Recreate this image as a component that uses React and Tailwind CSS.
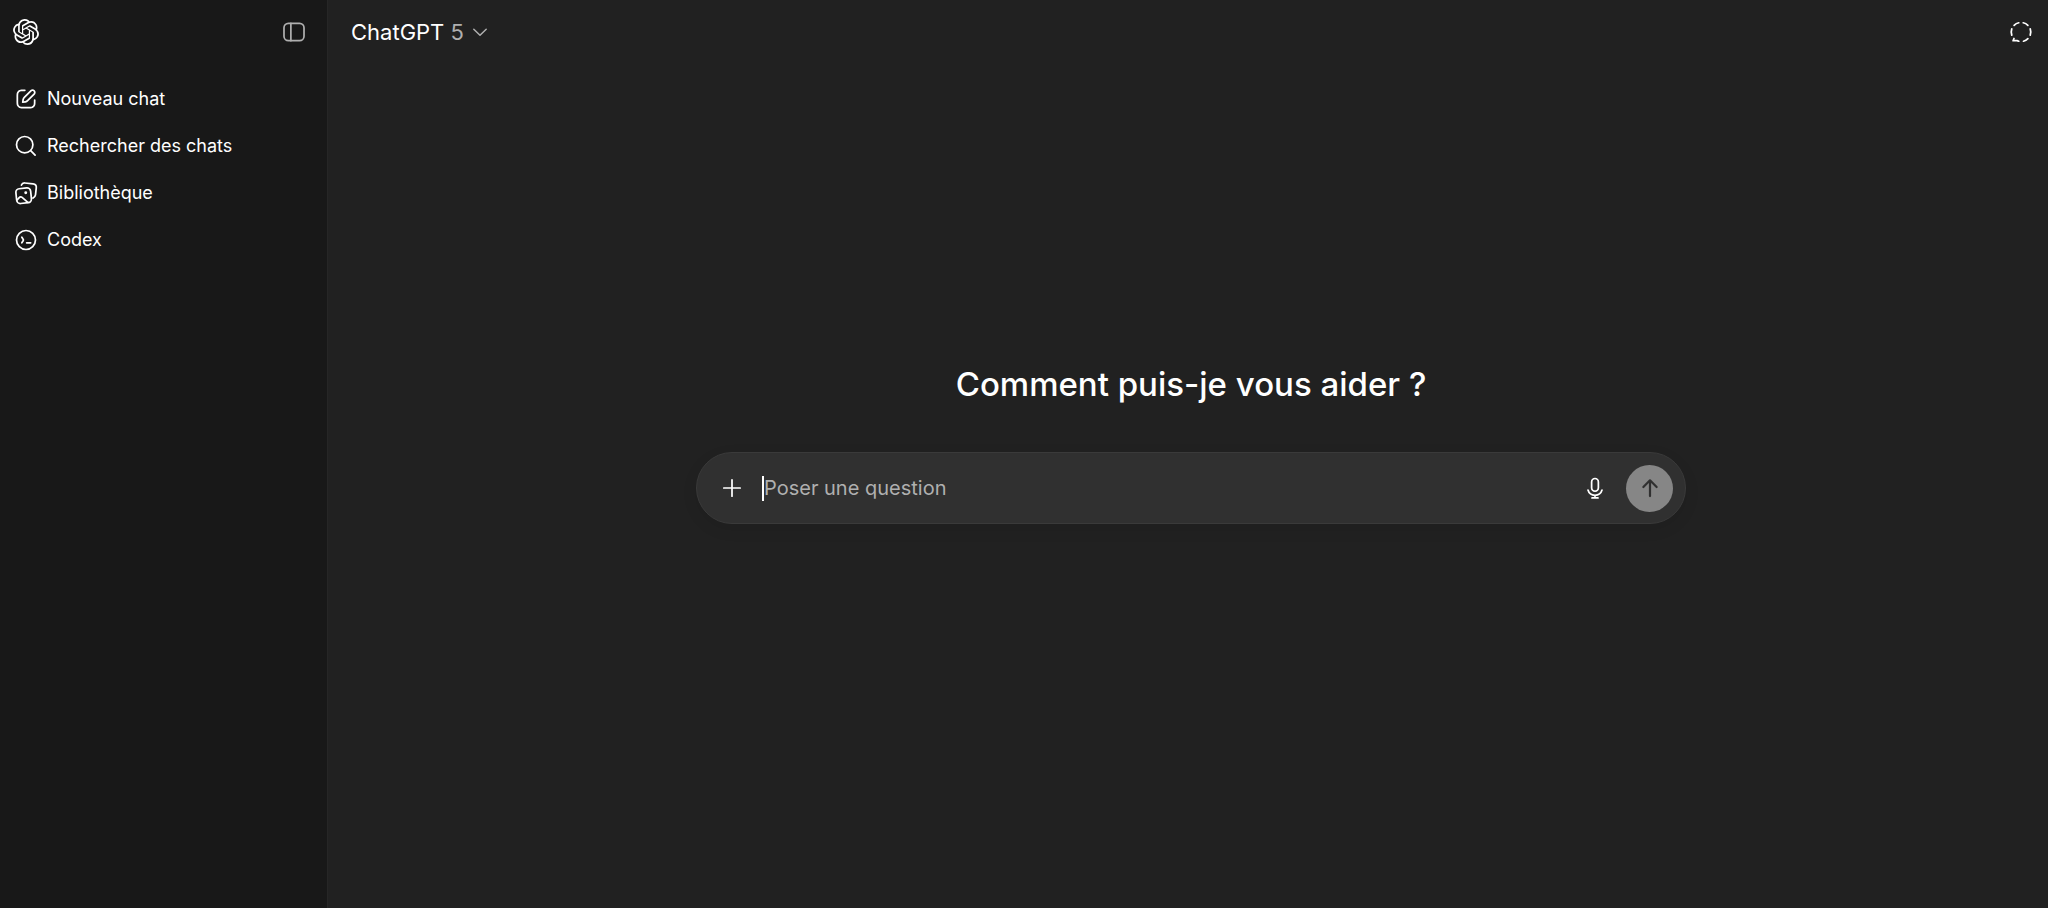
import React from "react";
import { SiOpenai } from "react-icons/si";

function Icon({ className = "", strokeWidth = 1.33, children }) {
  return (
    <svg
      viewBox="0 0 20 20"
      className={`size-[26px] shrink-0 ${className}`}
      fill="none"
      stroke="currentColor"
      strokeWidth={strokeWidth}
      strokeLinecap="round"
      strokeLinejoin="round"
      aria-hidden="true"
    >
      {children}
    </svg>
  );
}

const SidebarIcon = () => (
  <Icon>
    <rect x="2.3" y="3.3" width="15.4" height="13.4" rx="3.4" />
    <path d="M7.6 3.3v13.4" />
  </Icon>
);

const ComposeIcon = () => (
  <svg viewBox="0 0 20 20" className="size-[26px] shrink-0" fill="currentColor" aria-hidden="true">
    <path d="M2.6687 11.333V8.66699C2.6687 7.74455 2.66841 7.01205 2.71655 6.42285C2.76533 5.82612 2.86699 5.31731 3.10425 4.85156L3.25854 4.57617C3.64272 3.94975 4.19392 3.43995 4.85229 3.10449L5.02905 3.02149C5.44666 2.84233 5.90133 2.75849 6.42358 2.71582C7.01272 2.66769 7.74445 2.66797 8.66675 2.66797H9.16675C9.53393 2.66797 9.83165 2.96586 9.83179 3.33301C9.83179 3.70028 9.53402 3.99805 9.16675 3.99805H8.66675C7.7226 3.99805 7.05438 3.99834 6.53198 4.04102C6.14611 4.07254 5.87277 4.12568 5.65601 4.20313L5.45581 4.28906C5.01645 4.51293 4.64872 4.85345 4.39233 5.27149L4.28979 5.45508C4.16388 5.7022 4.08381 6.01663 4.04175 6.53125C3.99906 7.05373 3.99878 7.7226 3.99878 8.66699V11.333C3.99878 12.2774 3.99906 12.9463 4.04175 13.4688C4.08381 13.9833 4.16389 14.2978 4.28979 14.5449L4.39233 14.7285C4.64871 15.1465 5.01648 15.4871 5.45581 15.7109L5.65601 15.7969C5.87276 15.8743 6.14614 15.9265 6.53198 15.958C7.05439 16.0007 7.72256 16.002 8.66675 16.002H11.3337C12.2779 16.002 12.9461 16.0007 13.4685 15.958C13.9829 15.916 14.2976 15.8367 14.5447 15.7109L14.7292 15.6074C15.147 15.3511 15.4879 14.9841 15.7117 14.5449L15.7976 14.3447C15.8751 14.128 15.9272 13.8546 15.9587 13.4688C16.0014 12.9463 16.0017 12.2774 16.0017 11.333V10.833C16.0018 10.466 16.2997 10.1681 16.6667 10.168C17.0339 10.168 17.3316 10.4659 17.3318 10.833V11.333C17.3318 12.2555 17.3331 12.9879 17.2849 13.5771C17.2422 14.0993 17.1584 14.5541 16.9792 14.9717L16.8962 15.1484C16.5609 15.8066 16.0507 16.3571 15.4246 16.7412L15.1492 16.8955C14.6833 17.1329 14.1739 17.2354 13.5769 17.2842C12.9878 17.3323 12.256 17.332 11.3337 17.332H8.66675C7.74446 17.332 7.01271 17.3323 6.42358 17.2842C5.90135 17.2415 5.44665 17.1577 5.02905 16.9785L4.85229 16.8955C4.19396 16.5601 3.64271 16.0502 3.25854 15.4238L3.10425 15.1484C2.86697 14.6827 2.76534 14.1739 2.71655 13.5771C2.66841 12.9879 2.6687 12.2555 2.6687 11.333ZM13.4646 3.11328C14.4201 2.334 15.8288 2.38969 16.7195 3.28027L16.8865 3.46485C17.6141 4.35685 17.6143 5.64423 16.8865 6.53613L16.7195 6.7207L11.6726 11.7686C11.1373 12.3039 10.4624 12.6746 9.72827 12.8408L9.41089 12.8994L7.59351 13.1582C7.38637 13.1877 7.17701 13.1187 7.02905 12.9707C6.88112 12.8227 6.81199 12.6134 6.84155 12.4063L7.10132 10.5898L7.15991 10.2715C7.3262 9.53749 7.69692 8.86241 8.23218 8.32715L13.2791 3.28027L13.4646 3.11328ZM15.7791 4.2207C15.3753 3.81702 14.7366 3.79124 14.3035 4.14453L14.2195 4.2207L9.17261 9.26856C8.81541 9.62578 8.56774 10.0756 8.45679 10.5654L8.41772 10.7773L8.28296 11.7158L9.22241 11.582L9.43433 11.543C9.92426 11.432 10.3749 11.1844 10.7322 10.8271L15.7791 5.78027L15.8552 5.69629C16.185 5.29194 16.1852 4.708 15.8552 4.30371L15.7791 4.2207Z" />
  </svg>
);

const SearchIcon = () => (
  <Icon>
    <circle cx="9" cy="9" r="6.3" />
    <path d="M13.6 13.6l3.4 3.4" />
  </Icon>
);

const LibraryIcon = () => (
  <Icon>
    <rect x="2.5" y="6.4" width="11.4" height="11.4" rx="2.8" transform="rotate(-6 8.2 12.1)" />
    <path d="M6.5 3.9c.4-1.100 1.300-1.700 2.600-1.600l6.300.6c1.700.2 2.700 1.400 2.500 3.100l-.6 5.400c-.2 1.300-.9 2.100-2 2.500" />
    <circle cx="9.800" cy="9.800" r="1.100" fill="currentColor" stroke="none" />
    <path d="M3.100 15.400l1.700-1.900c.6-.7 1.500-.8 2.200-.2l4.400 3.900" />
  </Icon>
);

const CodexIcon = () => (
  <Icon>
    <circle cx="10" cy="10" r="7.3" />
    <path d="M6.800 7.900l1 1.500c.3.400.3.800 0 1.200l-1 1.500M10.500 12.200h3.100" />
  </Icon>
);

const TemporaryChatIcon = () => (
  <Icon>
    <path d="M4.700 4.900a7.300 7.300 0 0 1 3.600-2M11.700 2.900a7.300 7.300 0 0 1 3.600 2M17.100 7.600a7.300 7.300 0 0 1 0 4.800M15.300 15.100a7.300 7.300 0 0 1-3.400 2M8.300 17.100c-.5-.1-.9-.3-1.300-.4H3.900l.7-1.700M2.900 12.400a7.300 7.300 0 0 1 0-4.800" />
  </Icon>
);

const PlusIcon = () => (
  <Icon>
    <path d="M10 3.700v12.600M3.700 10h12.600" />
  </Icon>
);

const MicIcon = () => (
  <Icon>
    <rect x="7.400" y="2.700" width="5.200" height="9.800" rx="2.600" />
    <path d="M4.600 11.600c.7 2.400 2.800 4 5.400 4s4.700-1.600 5.400-4M10 15.600v2M7.700 17.600h4.600" />
  </Icon>
);

const ArrowUpIcon = () => (
  <Icon strokeWidth={1.7}>
    <path d="M10 16.200V4.200M4.900 9.200l5.100-5.100 5.100 5.100" />
  </Icon>
);

const navItems = [
  { label: "Nouveau chat", Glyph: ComposeIcon },
  { label: "Rechercher des chats", Glyph: SearchIcon },
  { label: "Bibliothèque", Glyph: LibraryIcon },
  { label: "Codex", Glyph: CodexIcon },
];

export default function App() {
  return (
    <div className="flex min-h-screen bg-[#212121] font-['Inter',sans-serif] text-white">
      <aside className="w-[328px] shrink-0 border-r border-[#262626] bg-[#181818]">
        <div className="flex h-16 items-center justify-between pr-5 pl-[13px]">
          <a href="#accueil" aria-label="ChatGPT">
            <SiOpenai className="size-[26px]" />
          </a>
          <button type="button" aria-label="Fermer la barre latérale" className="text-[#afafaf]">
            <SidebarIcon />
          </button>
        </div>
        <nav className="pt-[11px]">
          <ul>
            {navItems.map(({ label, Glyph }) => (
              <li key={label}>
                <a href="#chat" className="flex h-[47px] items-center gap-2 pl-[13px] text-lg">
                  <Glyph />
                  {label}
                </a>
              </li>
            ))}
          </ul>
        </nav>
      </aside>

      <div className="flex min-w-0 flex-1 flex-col">
        <header className="flex h-16 items-center justify-between pr-[14px] pl-[23px]">
          <button type="button" className="flex items-center gap-2 text-[22px]">
            <span>
              ChatGPT <span className="text-[#afafaf]">5</span>
            </span>
            <svg
              viewBox="0 0 16 16"
              className="size-4 text-[#afafaf]"
              fill="none"
              stroke="currentColor"
              strokeWidth="1.500"
              strokeLinecap="round"
              strokeLinejoin="round"
              aria-hidden="true"
            >
              <path d="M1.800 5.200L8 11.300l6.200-6.100" />
            </svg>
          </button>
          <button type="button" aria-label="Chat éphémère">
            <TemporaryChatIcon />
          </button>
        </header>

        <main className="flex flex-1 flex-col items-center pt-[296px] pl-[6px]">
          <h1 className="text-[33px] leading-[48px] font-medium">Comment puis-je vous aider ?</h1>
          <form
            className="mt-11 flex h-[72px] w-full max-w-[990px] items-center rounded-full border border-[#3a3a3a] bg-[#303030] pr-3 pl-[22px] shadow-[0_5px_16px_rgba(0,0,0,0.08)]"
            onSubmit={(event) => event.preventDefault()}
          >
            <button type="button" aria-label="Ajouter des fichiers">
              <PlusIcon />
            </button>
            <span className="ml-[17px] h-[25px] w-[2px] bg-white" />
            <input
              type="text"
              aria-label="Poser une question"
              placeholder="Poser une question"
              className="min-w-0 flex-1 bg-transparent text-xl outline-none placeholder:text-[#afafaf]"
            />
            <button type="button" aria-label="Dicter" className="mr-[18px]">
              <MicIcon />
            </button>
            <button
              type="submit"
              aria-label="Envoyer"
              className="flex size-[47px] items-center justify-center rounded-full bg-[#868686] text-[#303030]"
            >
              <ArrowUpIcon />
            </button>
          </form>
        </main>
      </div>
    </div>
  );
}
